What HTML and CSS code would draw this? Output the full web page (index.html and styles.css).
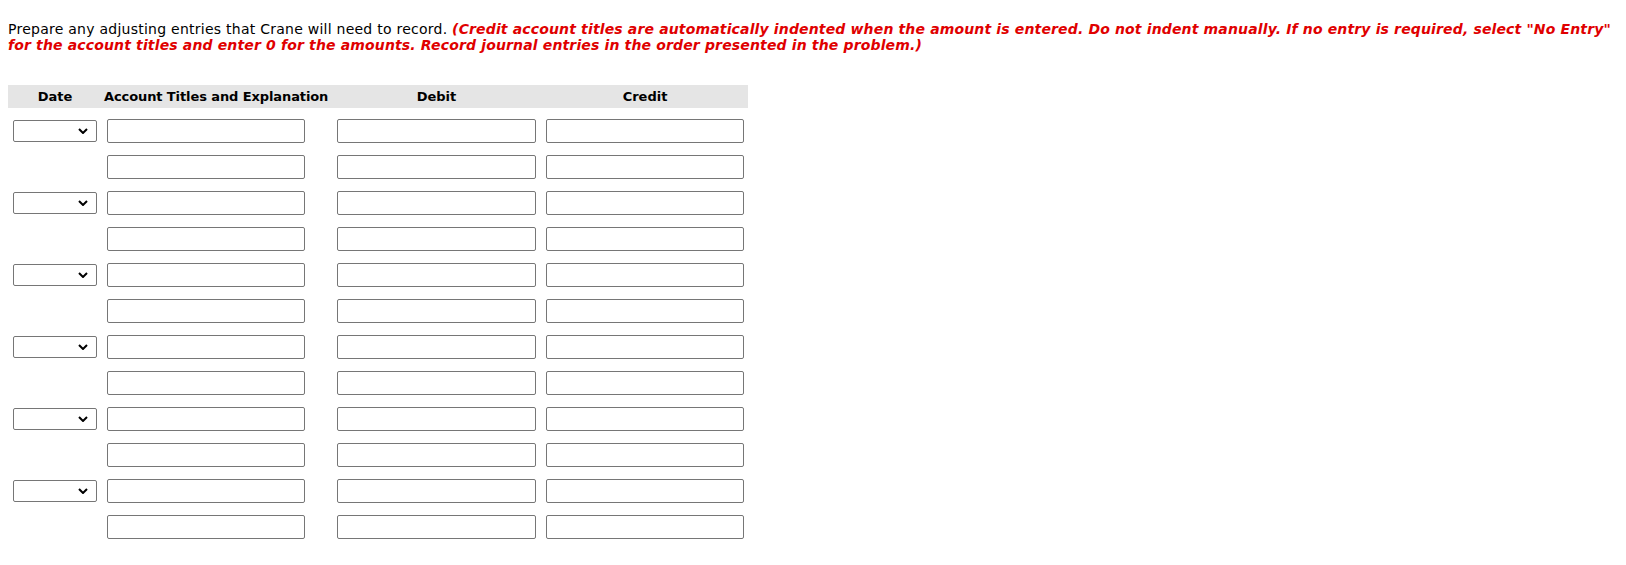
FILE: index.html
```html
<!DOCTYPE html>
<html lang="en">
<head>
    <meta charset="UTF-8">
    <meta name="viewport" content="width=device-width, initial-scale=1.0">
    <title>Adjusting Entries</title>
    <link rel="stylesheet" href="styles.css">
</head>
<body>
    <p class="prompt">Prepare any adjusting entries that Crane will need to record. <em class="note">(Credit account titles are automatically indented when the amount is entered. Do not indent manually. If no entry is required, select "No Entry" for the account titles and enter 0 for the amounts. Record journal entries in the order presented in the problem.)</em></p>

    <div class="journal">
        <div class="jhead">
            <div class="c-date">Date</div>
            <div class="c-acct head-acct">Account Titles and Explanation</div>
            <div class="c-debit">Debit</div>
            <div class="c-credit">Credit</div>
        </div>
        <div id="rows"></div>
    </div>

    <script>
        var rows = document.querySelector('#rows');
        var chevron = '<svg class="chev" width="10" height="6" viewBox="0 0 10 6"><path d="M1 1 L5 5 L9 1" fill="none" stroke="#000" stroke-width="2"/></svg>';
        var html = '';

        // 6 entries, two lines each: first line has the date picker
        for (var i = 0; i < 12; i++) {
            html += '<div class="jrow">';
            if (i % 2 == 0) {
                html += '<div class="c-date"><div class="sel-wrap"><select class="date-sel"><option></option></select>' + chevron + '</div></div>';
            } else {
                html += '<div class="c-date"></div>';
            }
            html += '<div class="c-acct"><input type="text" class="field"></div>';
            html += '<div class="c-debit"><input type="text" class="field"></div>';
            html += '<div class="c-credit"><input type="text" class="field"></div>';
            html += '</div>';
        }
        rows.innerHTML = html;
    </script>
</body>
</html>
```

FILE: styles.css
```css
body{
    margin: 8px;
    font-family: "DejaVu Sans", Verdana, sans-serif;
    font-size: 13px;
    color: #000;
    background: #fff;
}
.prompt{
    margin: 13px 0 32px 0;
    font-size: 14px;
    line-height: 16px;
    letter-spacing: 0.25px;
}
.note{
    color: #e00000;
    font-weight: bold;
    letter-spacing: 0.15px;
}
.journal{
    width: 740px;
}
.jhead{
    display: flex;
    height: 23px;
    line-height: 23px;
    background: #e5e5e5;
    font-weight: bold;
    white-space: nowrap;
}
.jrow{
    display: flex;
    align-items: center;
    height: 24px;
    margin-top: 12px;
}
.jhead + #rows .jrow:first-child{
    margin-top: 11px;
}
.c-date{
    width: 84px;
    margin-left: 5px;
    text-align: center;
}
.c-acct{
    width: 198px;
    margin-left: 10px;
}
.head-acct{
    text-indent: -3px;
    letter-spacing: -0.1px;
}
.c-debit{
    width: 199px;
    margin-left: 32px;
    text-align: center;
}
.c-credit{
    width: 198px;
    margin-left: 10px;
    text-align: center;
}
.field{
    display: block;
    box-sizing: border-box;
    width: 100%;
    height: 24px;
    margin: 0;
    padding: 1px 3px;
    border: 1px solid #767676;
    border-radius: 2px;
    background: #fff;
    font: 13px "DejaVu Sans", Verdana, sans-serif;
}
.sel-wrap{
    position: relative;
    width: 84px;
    height: 22px;
}
.date-sel{
    display: block;
    box-sizing: border-box;
    width: 84px;
    height: 22px;
    margin: 0;
    border: 1px solid #767676;
    border-radius: 2px;
    background-color: #fff;
    appearance: none;
    -webkit-appearance: none;
    font: 13px "DejaVu Sans", Verdana, sans-serif;
}
.chev{
    position: absolute;
    top: 8px;
    right: 9px;
    pointer-events: none;
}
```
